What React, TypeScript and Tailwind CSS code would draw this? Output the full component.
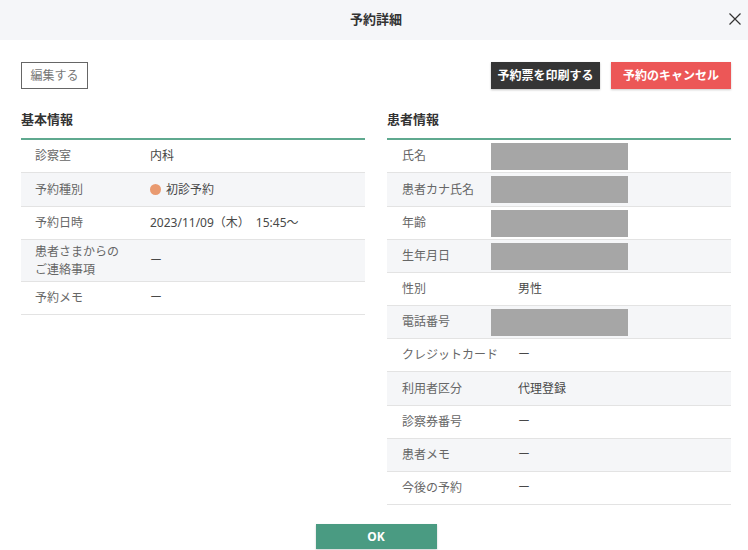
import React from "react";

const FONT = { fontFamily: '"Noto Sans", "Noto Sans CJK JP", sans-serif' };

type Row = { label: React.ReactNode; value?: React.ReactNode; masked?: boolean; h?: number };

const leftRows: Row[] = [
  { label: "診察室", value: "内科" },
  {
    label: "予約種別",
    value: (
      <span className="flex items-center gap-[5px]">
        <span className="inline-block w-[11px] h-[11px] rounded-full bg-[#e99a70]" />
        初診予約
      </span>
    ),
    h: 34,
  },
  { label: "予約日時", value: "2023/11/09（木）　15:45～" },
  {
    label: (
      <span className="block leading-[18px]">
        患者さまからの
        <br />
        ご連絡事項
      </span>
    ),
    value: "ー",
    h: 42,
  },
  { label: "予約メモ", value: "ー" },
];

const rightRows: Row[] = [
  { label: "氏名", masked: true },
  { label: "患者カナ氏名", masked: true, h: 34 },
  { label: "年齢", masked: true },
  { label: "生年月日", masked: true },
  { label: "性別", value: "男性" },
  { label: "電話番号", masked: true },
  { label: "クレジットカード", value: "ー" },
  { label: "利用者区分", value: "代理登録", h: 34 },
  { label: "診察券番号", value: "ー" },
  { label: "患者メモ", value: "ー" },
  { label: "今後の予約", value: "ー" },
];

function Section({ title, rows, labelW, right }: { title: string; rows: Row[]; labelW: number; right?: boolean }) {
  return (
    <div className="w-[344px]">
      <div className="h-[30px] pb-[6px] flex items-center text-[13px] font-bold text-[#333]">{title}</div>
      <div className="h-[2px] bg-[#5fa98f]" />
      {rows.map((r, i) => (
        <div
          key={i}
          className={`flex items-center border-b border-[#e3e3e3] text-[12px] ${i % 2 === 1 ? "bg-[#f5f6f8]" : "bg-white"}`}
          style={{ height: r.h ?? 33 }}
        >
          <div className={`${right ? "pl-[15px]" : "pl-[14px]"} text-[#666] shrink-0`} style={{ width: r.masked ? 104 : labelW }}>
            {r.label}
          </div>
          {r.masked ? (
            <div className="w-[137px] h-[27px] bg-[#a6a6a6]" />
          ) : (
            <div className="text-[#484848]">{r.value}</div>
          )}
        </div>
      ))}
    </div>
  );
}

export default function App() {
  return (
    <div className="w-[748px] h-[550px] bg-white overflow-hidden" style={FONT}>
      <div className="relative h-10 bg-[#f5f6f9] flex items-center justify-center">
        <span className="text-[13px] font-bold text-[#333] pl-[4px]">予約詳細</span>
        <svg className="absolute left-[729px] top-[13px]" width="12" height="12" viewBox="0 0 12 12">
          <path d="M0.5 0.5 L11.5 11.5 M11.5 0.5 L0.5 11.5" stroke="#333" strokeWidth="1.2" fill="none" />
        </svg>
      </div>
      <div className="pl-[21px] pr-[17px] pt-[22px]">
        <div className="flex items-center h-[27px]">
          <button className="w-[67px] h-[27px] border border-[#666] text-[12px] text-[#777] flex items-center justify-center">
            編集する
          </button>
          <div className="flex-1" />
          <button className="w-[109px] h-[27px] bg-[#353535] text-white text-[12px] font-bold flex items-center justify-center shadow-[0_1px_2px_rgba(0,0,0,0.25)]">
            予約票を印刷する
          </button>
          <button className="ml-[11px] w-[120px] h-[27px] bg-[#ec5757] text-white text-[12px] font-bold flex items-center justify-center shadow-[0_1px_2px_rgba(0,0,0,0.2)]">
            予約のキャンセル
          </button>
        </div>
        <div className="flex justify-between mt-[19px]">
          <Section title="基本情報" rows={leftRows} labelW={129} />
          <Section title="患者情報" rows={rightRows} labelW={131} right />
        </div>
        <div className="flex justify-center mt-[19px]">
          <button className="w-[121px] h-[25px] bg-[#4a9b82] text-white text-[12px] font-bold flex items-center justify-center shadow-[0_1px_2px_rgba(0,0,0,0.2)]">
            OK
          </button>
        </div>
      </div>
    </div>
  );
}
